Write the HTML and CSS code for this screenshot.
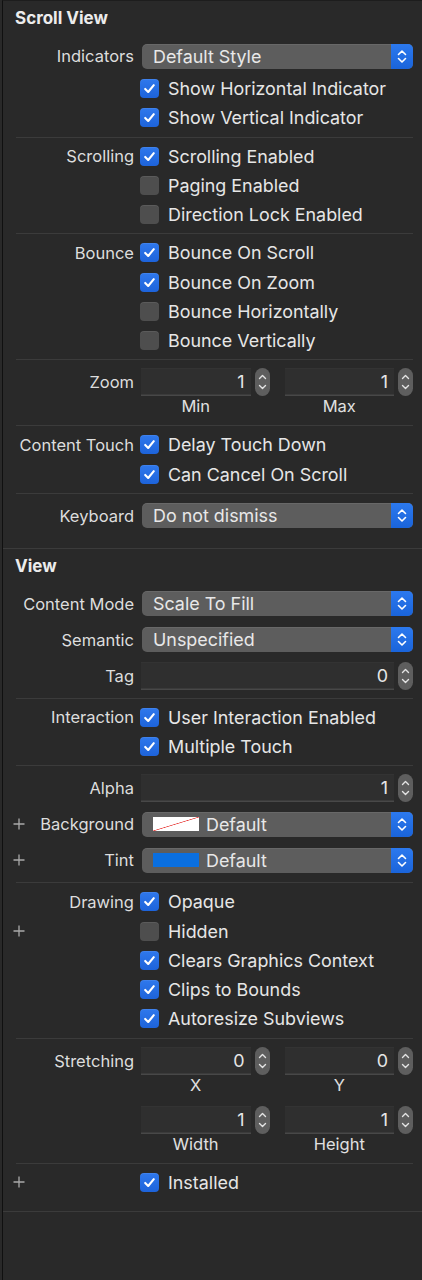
FILE: index.html
```html
<!DOCTYPE html>
<html>
<head>
<meta charset="utf-8">
<title>Attributes Inspector</title>
<link rel="stylesheet" href="styles.css">
</head>
<body>
<div class="panel">

  <section class="section first">
    <h2 class="sec-title">Scroll View</h2>

    <div class="group">
      <div class="row row-ctl">
        <span class="label">Indicators</span>
        <div class="popup"><span class="popup-text">Default Style</span><span class="popup-arrows"><svg viewBox="0 0 22 25" width="22" height="25"><path d="M7.5 10.5 L11 7 L14.5 10.5 M7.5 14.5 L11 18 L14.5 14.5" fill="none" stroke="#fff" stroke-width="1.6" stroke-linecap="round" stroke-linejoin="round"/></svg></span></div>
      </div>
      <div class="row row-check">
        <span class="label"></span>
        <span class="check"><span class="box on"><svg viewBox="0 0 19 19" width="19" height="19"><path d="M5.2 9.9 L8.2 13 L13.8 6.2" fill="none" stroke="#fff" stroke-width="2.1" stroke-linecap="round" stroke-linejoin="round"/></svg></span>Show Horizontal Indicator</span>
      </div>
      <div class="row row-check">
        <span class="label"></span>
        <span class="check"><span class="box on"><svg viewBox="0 0 19 19" width="19" height="19"><path d="M5.2 9.9 L8.2 13 L13.8 6.2" fill="none" stroke="#fff" stroke-width="2.1" stroke-linecap="round" stroke-linejoin="round"/></svg></span>Show Vertical Indicator</span>
      </div>
    </div>

    <div class="group">
      <div class="row row-check">
        <span class="label">Scrolling</span>
        <span class="check"><span class="box on"><svg viewBox="0 0 19 19" width="19" height="19"><path d="M5.2 9.9 L8.2 13 L13.8 6.2" fill="none" stroke="#fff" stroke-width="2.1" stroke-linecap="round" stroke-linejoin="round"/></svg></span>Scrolling Enabled</span>
      </div>
      <div class="row row-check">
        <span class="label"></span>
        <span class="check"><span class="box"></span>Paging Enabled</span>
      </div>
      <div class="row row-check">
        <span class="label"></span>
        <span class="check"><span class="box"></span>Direction Lock Enabled</span>
      </div>
    </div>

    <div class="group">
      <div class="row row-check">
        <span class="label">Bounce</span>
        <span class="check"><span class="box on"><svg viewBox="0 0 19 19" width="19" height="19"><path d="M5.2 9.9 L8.2 13 L13.8 6.2" fill="none" stroke="#fff" stroke-width="2.1" stroke-linecap="round" stroke-linejoin="round"/></svg></span>Bounce On Scroll</span>
      </div>
      <div class="row row-check">
        <span class="label"></span>
        <span class="check"><span class="box on"><svg viewBox="0 0 19 19" width="19" height="19"><path d="M5.2 9.9 L8.2 13 L13.8 6.2" fill="none" stroke="#fff" stroke-width="2.1" stroke-linecap="round" stroke-linejoin="round"/></svg></span>Bounce On Zoom</span>
      </div>
      <div class="row row-check">
        <span class="label"></span>
        <span class="check"><span class="box"></span>Bounce Horizontally</span>
      </div>
      <div class="row row-check">
        <span class="label"></span>
        <span class="check"><span class="box"></span>Bounce Vertically</span>
      </div>
    </div>

    <div class="group">
      <div class="row row-num">
        <span class="label label-field">Zoom</span>
        <div class="pair">
          <div class="num">
            <span class="field">1</span>
            <span class="stepper"><svg viewBox="0 0 15 28" width="15" height="28"><path d="M4.5 10.5 L7.5 7.5 L10.5 10.5 M4.5 17.5 L7.5 20.5 L10.5 17.5" fill="none" stroke="#e4e4e4" stroke-width="1.4" stroke-linecap="round" stroke-linejoin="round"/></svg></span>
            <span class="caption">Min</span>
          </div>
          <div class="num">
            <span class="field">1</span>
            <span class="stepper"><svg viewBox="0 0 15 28" width="15" height="28"><path d="M4.5 10.5 L7.5 7.5 L10.5 10.5 M4.5 17.5 L7.5 20.5 L10.5 17.5" fill="none" stroke="#e4e4e4" stroke-width="1.4" stroke-linecap="round" stroke-linejoin="round"/></svg></span>
            <span class="caption">Max</span>
          </div>
        </div>
      </div>
    </div>

    <div class="group">
      <div class="row row-check">
        <span class="label">Content Touch</span>
        <span class="check"><span class="box on"><svg viewBox="0 0 19 19" width="19" height="19"><path d="M5.2 9.9 L8.2 13 L13.8 6.2" fill="none" stroke="#fff" stroke-width="2.1" stroke-linecap="round" stroke-linejoin="round"/></svg></span>Delay Touch Down</span>
      </div>
      <div class="row row-check">
        <span class="label"></span>
        <span class="check"><span class="box on"><svg viewBox="0 0 19 19" width="19" height="19"><path d="M5.2 9.9 L8.2 13 L13.8 6.2" fill="none" stroke="#fff" stroke-width="2.1" stroke-linecap="round" stroke-linejoin="round"/></svg></span>Can Cancel On Scroll</span>
      </div>
    </div>

    <div class="group">
      <div class="row row-ctl">
        <span class="label">Keyboard</span>
        <div class="popup"><span class="popup-text">Do not dismiss</span><span class="popup-arrows"><svg viewBox="0 0 22 25" width="22" height="25"><path d="M7.5 10.5 L11 7 L14.5 10.5 M7.5 14.5 L11 18 L14.5 14.5" fill="none" stroke="#fff" stroke-width="1.6" stroke-linecap="round" stroke-linejoin="round"/></svg></span></div>
      </div>
    </div>
  </section>

  <section class="section">
    <h2 class="sec-title">View</h2>

    <div class="group">
      <div class="row row-ctl">
        <span class="label">Content Mode</span>
        <div class="popup"><span class="popup-text">Scale To Fill</span><span class="popup-arrows"><svg viewBox="0 0 22 25" width="22" height="25"><path d="M7.5 10.5 L11 7 L14.5 10.5 M7.5 14.5 L11 18 L14.5 14.5" fill="none" stroke="#fff" stroke-width="1.6" stroke-linecap="round" stroke-linejoin="round"/></svg></span></div>
      </div>
      <div class="row row-ctl">
        <span class="label">Semantic</span>
        <div class="popup"><span class="popup-text">Unspecified</span><span class="popup-arrows"><svg viewBox="0 0 22 25" width="22" height="25"><path d="M7.5 10.5 L11 7 L14.5 10.5 M7.5 14.5 L11 18 L14.5 14.5" fill="none" stroke="#fff" stroke-width="1.6" stroke-linecap="round" stroke-linejoin="round"/></svg></span></div>
      </div>
      <div class="row row-ctl">
        <span class="label">Tag</span>
        <div class="num single">
          <span class="field">0</span>
          <span class="stepper"><svg viewBox="0 0 15 28" width="15" height="28"><path d="M4.5 10.5 L7.5 7.5 L10.5 10.5 M4.5 17.5 L7.5 20.5 L10.5 17.5" fill="none" stroke="#e4e4e4" stroke-width="1.4" stroke-linecap="round" stroke-linejoin="round"/></svg></span>
        </div>
      </div>
    </div>

    <div class="group">
      <div class="row row-check">
        <span class="label">Interaction</span>
        <span class="check"><span class="box on"><svg viewBox="0 0 19 19" width="19" height="19"><path d="M5.2 9.9 L8.2 13 L13.8 6.2" fill="none" stroke="#fff" stroke-width="2.1" stroke-linecap="round" stroke-linejoin="round"/></svg></span>User Interaction Enabled</span>
      </div>
      <div class="row row-check">
        <span class="label"></span>
        <span class="check"><span class="box on"><svg viewBox="0 0 19 19" width="19" height="19"><path d="M5.2 9.9 L8.2 13 L13.8 6.2" fill="none" stroke="#fff" stroke-width="2.1" stroke-linecap="round" stroke-linejoin="round"/></svg></span>Multiple Touch</span>
      </div>
    </div>

    <div class="group">
      <div class="row row-ctl">
        <span class="label">Alpha</span>
        <div class="num single">
          <span class="field">1</span>
          <span class="stepper"><svg viewBox="0 0 15 28" width="15" height="28"><path d="M4.5 10.5 L7.5 7.5 L10.5 10.5 M4.5 17.5 L7.5 20.5 L10.5 17.5" fill="none" stroke="#e4e4e4" stroke-width="1.4" stroke-linecap="round" stroke-linejoin="round"/></svg></span>
        </div>
      </div>
      <div class="row row-ctl">
        <span class="label has-plus"><svg class="plus" viewBox="0 0 12 12" width="12" height="12"><path d="M6 0.5 V11.5 M0.5 6 H11.5" stroke="#a9a9a9" stroke-width="1.3"/></svg><span>Background</span></span>
        <div class="popup"><span class="popup-text"><span class="swatch swatch-none"></span>Default</span><span class="popup-arrows"><svg viewBox="0 0 22 25" width="22" height="25"><path d="M7.5 10.5 L11 7 L14.5 10.5 M7.5 14.5 L11 18 L14.5 14.5" fill="none" stroke="#fff" stroke-width="1.6" stroke-linecap="round" stroke-linejoin="round"/></svg></span></div>
      </div>
      <div class="row row-ctl">
        <span class="label has-plus"><svg class="plus" viewBox="0 0 12 12" width="12" height="12"><path d="M6 0.5 V11.5 M0.5 6 H11.5" stroke="#a9a9a9" stroke-width="1.3"/></svg><span>Tint</span></span>
        <div class="popup"><span class="popup-text"><span class="swatch swatch-tint"></span>Default</span><span class="popup-arrows"><svg viewBox="0 0 22 25" width="22" height="25"><path d="M7.5 10.5 L11 7 L14.5 10.5 M7.5 14.5 L11 18 L14.5 14.5" fill="none" stroke="#fff" stroke-width="1.6" stroke-linecap="round" stroke-linejoin="round"/></svg></span></div>
      </div>
    </div>

    <div class="group">
      <div class="row row-check">
        <span class="label">Drawing</span>
        <span class="check"><span class="box on"><svg viewBox="0 0 19 19" width="19" height="19"><path d="M5.2 9.9 L8.2 13 L13.8 6.2" fill="none" stroke="#fff" stroke-width="2.1" stroke-linecap="round" stroke-linejoin="round"/></svg></span>Opaque</span>
      </div>
      <div class="row row-check">
        <span class="label has-plus"><svg class="plus" viewBox="0 0 12 12" width="12" height="12"><path d="M6 0.5 V11.5 M0.5 6 H11.5" stroke="#a9a9a9" stroke-width="1.3"/></svg><span></span></span>
        <span class="check"><span class="box"></span>Hidden</span>
      </div>
      <div class="row row-check">
        <span class="label"></span>
        <span class="check"><span class="box on"><svg viewBox="0 0 19 19" width="19" height="19"><path d="M5.2 9.9 L8.2 13 L13.8 6.2" fill="none" stroke="#fff" stroke-width="2.1" stroke-linecap="round" stroke-linejoin="round"/></svg></span>Clears Graphics Context</span>
      </div>
      <div class="row row-check">
        <span class="label"></span>
        <span class="check"><span class="box on"><svg viewBox="0 0 19 19" width="19" height="19"><path d="M5.2 9.9 L8.2 13 L13.8 6.2" fill="none" stroke="#fff" stroke-width="2.1" stroke-linecap="round" stroke-linejoin="round"/></svg></span>Clips to Bounds</span>
      </div>
      <div class="row row-check">
        <span class="label"></span>
        <span class="check"><span class="box on"><svg viewBox="0 0 19 19" width="19" height="19"><path d="M5.2 9.9 L8.2 13 L13.8 6.2" fill="none" stroke="#fff" stroke-width="2.1" stroke-linecap="round" stroke-linejoin="round"/></svg></span>Autoresize Subviews</span>
      </div>
    </div>

    <div class="group">
      <div class="row row-num">
        <span class="label label-field">Stretching</span>
        <div class="pair">
          <div class="num">
            <span class="field">0</span>
            <span class="stepper"><svg viewBox="0 0 15 28" width="15" height="28"><path d="M4.5 10.5 L7.5 7.5 L10.5 10.5 M4.5 17.5 L7.5 20.5 L10.5 17.5" fill="none" stroke="#e4e4e4" stroke-width="1.4" stroke-linecap="round" stroke-linejoin="round"/></svg></span>
            <span class="caption">X</span>
          </div>
          <div class="num">
            <span class="field">0</span>
            <span class="stepper"><svg viewBox="0 0 15 28" width="15" height="28"><path d="M4.5 10.5 L7.5 7.5 L10.5 10.5 M4.5 17.5 L7.5 20.5 L10.5 17.5" fill="none" stroke="#e4e4e4" stroke-width="1.4" stroke-linecap="round" stroke-linejoin="round"/></svg></span>
            <span class="caption">Y</span>
          </div>
        </div>
      </div>
      <div class="row row-num">
        <span class="label label-field"></span>
        <div class="pair">
          <div class="num">
            <span class="field">1</span>
            <span class="stepper"><svg viewBox="0 0 15 28" width="15" height="28"><path d="M4.5 10.5 L7.5 7.5 L10.5 10.5 M4.5 17.5 L7.5 20.5 L10.5 17.5" fill="none" stroke="#e4e4e4" stroke-width="1.4" stroke-linecap="round" stroke-linejoin="round"/></svg></span>
            <span class="caption">Width</span>
          </div>
          <div class="num">
            <span class="field">1</span>
            <span class="stepper"><svg viewBox="0 0 15 28" width="15" height="28"><path d="M4.5 10.5 L7.5 7.5 L10.5 10.5 M4.5 17.5 L7.5 20.5 L10.5 17.5" fill="none" stroke="#e4e4e4" stroke-width="1.4" stroke-linecap="round" stroke-linejoin="round"/></svg></span>
            <span class="caption">Height</span>
          </div>
        </div>
      </div>
    </div>

    <div class="group">
      <div class="row row-check">
        <span class="label has-plus"><svg class="plus" viewBox="0 0 12 12" width="12" height="12"><path d="M6 0.5 V11.5 M0.5 6 H11.5" stroke="#a9a9a9" stroke-width="1.3"/></svg><span></span></span>
        <span class="check"><span class="box on"><svg viewBox="0 0 19 19" width="19" height="19"><path d="M5.2 9.9 L8.2 13 L13.8 6.2" fill="none" stroke="#fff" stroke-width="2.1" stroke-linecap="round" stroke-linejoin="round"/></svg></span>Installed</span>
      </div>
    </div>
  </section>

</div>
</body>
</html>
```

FILE: styles.css
```css
* {
  box-sizing: border-box;
  margin: 0;
  padding: 0;
}

html, body {
  background: #292929;
}

body {
  width: 422px;
  height: 1280px;
  overflow: hidden;
  font-family: Inter, "Noto Sans", sans-serif;
  color: #e4e4e4;
}

.panel {
  margin-left: 2px;
  min-height: 1280px;
  border-left: 1px solid #101010;
  border-top: 1px solid #1d1d1d;
}

.section {
  border-bottom: 1px solid #3b3b3b;
  padding-bottom: 10px;
}

.sec-title {
  font-size: 17px;
  font-weight: 700;
  line-height: 20px;
  padding: 7px 0 6px 12px;
  color: #ececec;
}

.group {
  margin: 0 9px 0 13px;
  padding: 4px 0;
  border-bottom: 1px solid #3b3b3b;
}

.group:last-child {
  border-bottom: none;
}

.row {
  display: grid;
  grid-template-columns: 118px 1fr;
  column-gap: 6px;
  align-items: center;
}

.row-check {
  height: 29.25px;
}

.row-ctl {
  height: 36px;
}

.row-num {
  align-items: start;
  margin: 4px 0 7px;
}

.row-num + .row-num {
  margin-top: 13px;
}

.label {
  display: flex;
  justify-content: flex-end;
  align-items: center;
  font-size: 16.5px;
  color: #dddddd;
  white-space: nowrap;
}

.label-field {
  height: 28px;
}

.label.has-plus {
  justify-content: space-between;
}

.plus {
  margin-left: -3px;
  flex: none;
}

.check {
  display: flex;
  align-items: center;
  gap: 9px;
  font-size: 17.9px;
  color: #e6e6e6;
  white-space: nowrap;
}

.box {
  width: 19px;
  height: 19px;
  flex: none;
  display: flex;
  border-radius: 4px;
  background: #4e4e4e;
  box-shadow: inset 0 1px 0 rgba(255, 255, 255, 0.08);
}

.box.on {
  background: linear-gradient(#2f78ec, #1d63da);
}

.popup {
  margin-left: 2px;
  height: 25px;
  display: flex;
  align-items: center;
  border-radius: 5px;
  overflow: hidden;
  background: #5d5d5d;
  box-shadow: inset 0 1px 0 rgba(255, 255, 255, 0.07);
}

.popup-text {
  flex: 1;
  display: flex;
  align-items: center;
  gap: 7px;
  padding-left: 11px;
  font-size: 17.9px;
  color: #e8e8e8;
  white-space: nowrap;
}

.popup-arrows {
  width: 22px;
  height: 25px;
  flex: none;
  display: flex;
  background: linear-gradient(#2c79ee, #1a64da);
}

.swatch {
  width: 46px;
  height: 14px;
  flex: none;
}

.swatch-none {
  background: #ffffff linear-gradient(to bottom right, transparent calc(50% - 0.7px), #e8413f 50%, transparent calc(50% + 0.7px));
}

.swatch-tint {
  background: #0a6fe0;
}

.pair {
  margin-left: 1px;
  display: grid;
  grid-template-columns: 1fr 1fr;
  column-gap: 15px;
}

.num {
  display: grid;
  grid-template-columns: 1fr 15px;
  column-gap: 4px;
  align-items: center;
}

.num.single {
  margin-left: 1px;
}

.field {
  height: 28px;
  line-height: 28px;
  text-align: right;
  padding-right: 6px;
  font-size: 17.9px;
  color: #e6e6e6;
  background: #2f2f2f;
  box-shadow: inset 0 -1.5px 0 #484848, inset 0 1px 0 #333333;
}

.stepper {
  width: 15px;
  height: 28px;
  display: flex;
  border-radius: 7.5px;
  background: #5e5e5e;
}

.caption {
  grid-column: 1;
  margin-top: 2px;
  text-align: center;
  font-size: 16.5px;
  line-height: 16px;
  color: #e0e0e0;
}
```
